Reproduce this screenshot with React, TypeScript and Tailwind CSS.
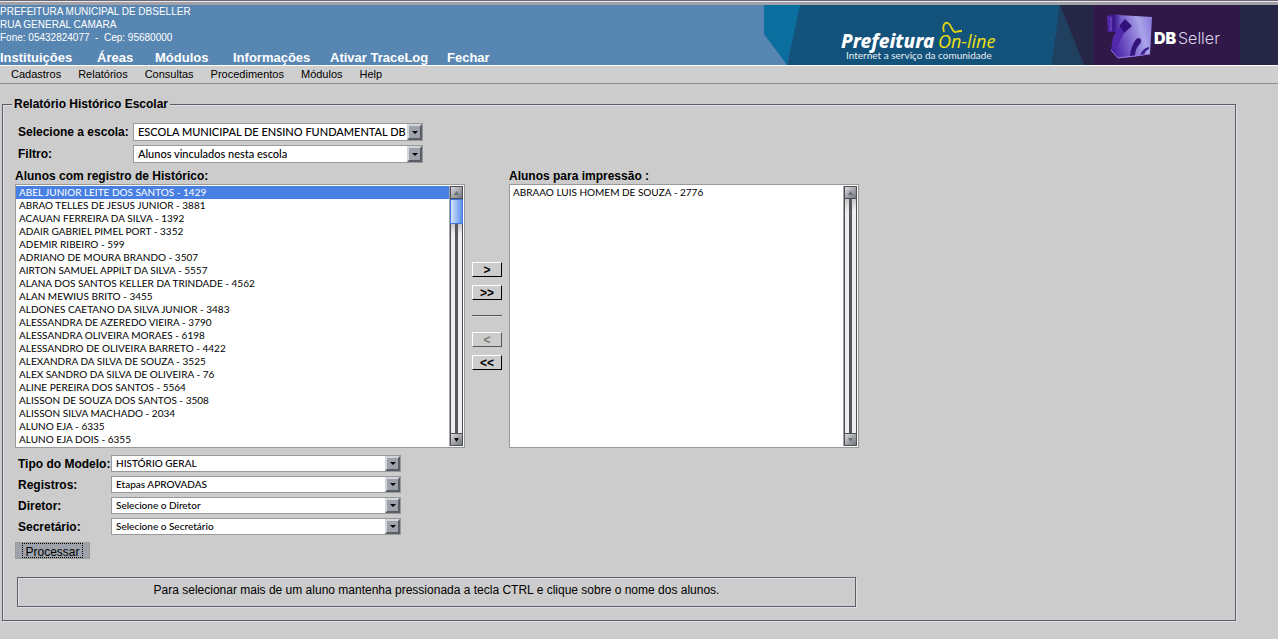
import { useId, useState } from "react";

const mainMenu = [
  { label: "Instituições", width: "w-[97px]" },
  { label: "Áreas", width: "w-[58px]" },
  { label: "Módulos", width: "w-[78px]" },
  { label: "Informações", width: "w-[97px]" },
  { label: "Ativar TraceLog", width: "w-[117px]" },
  { label: "Fechar", width: "w-[60px]" },
];

const subMenu = ["Cadastros", "Relatórios", "Consultas", "Procedimentos", "Módulos", "Help"];

const alunos = [
  "ABEL JUNIOR LEITE DOS SANTOS - 1429",
  "ABRAO TELLES DE JESUS JUNIOR - 3881",
  "ACAUAN FERREIRA DA SILVA - 1392",
  "ADAIR GABRIEL PIMEL PORT - 3352",
  "ADEMIR RIBEIRO - 599",
  "ADRIANO DE MOURA BRANDO - 3507",
  "AIRTON SAMUEL APPILT DA SILVA - 5557",
  "ALANA DOS SANTOS KELLER DA TRINDADE - 4562",
  "ALAN MEWIUS BRITO - 3455",
  "ALDONES CAETANO DA SILVA JUNIOR - 3483",
  "ALESSANDRA DE AZEREDO VIEIRA - 3790",
  "ALESSANDRA OLIVEIRA MORAES - 6198",
  "ALESSANDRO DE OLIVEIRA BARRETO - 4422",
  "ALEXANDRA DA SILVA DE SOUZA - 3525",
  "ALEX SANDRO DA SILVA DE OLIVEIRA - 76",
  "ALINE PEREIRA DOS SANTOS - 5564",
  "ALISSON DE SOUZA DOS SANTOS - 3508",
  "ALISSON SILVA MACHADO - 2034",
  "ALUNO EJA - 6335",
  "ALUNO EJA DOIS - 6355",
];

function Banner() {
  return (
    <svg width="514" height="60" viewBox="0 0 514 60" className="shrink-0" role="img" aria-label="Prefeitura On-line, DBSeller">
      <defs>
        <linearGradient id="cube" x1="0" y1="0.6" x2="1" y2="0.3">
          <stop offset="0" stopColor="#4a20a6" />
          <stop offset="0.4" stopColor="#7a62cc" />
          <stop offset="0.75" stopColor="#aaa4e8" />
          <stop offset="1" stopColor="#8c7ede" />
        </linearGradient>
        <linearGradient id="shade" x1="0" y1="0" x2="1" y2="0">
          <stop offset="0" stopColor="#5a2cb0" />
          <stop offset="0.5" stopColor="#3a168c" />
          <stop offset="1" stopColor="#6e55c4" />
        </linearGradient>
      </defs>
      <path d="M0 0H37L23 60L0 29Z" fill="#0a6f9f" />
      <path d="M36 0H300V60H23Z" fill="#13527b" />
      <path d="M296 0H514V60H288Z" fill="#262746" />
      <path d="M296 0L320 60H288Z" fill="#20405f" />
      <rect x="330" width="146" height="60" fill="#301849" />
      <path d="M354 10L388 12L386 49L368 52L354 53L347 45L349 32L353 27Z" fill="url(#cube)" />
      <path d="M343 11L354 9L357 14L353 27L344 27Z" fill="url(#shade)" />
      <path d="M347 12V26" stroke="#7c58d0" strokeWidth="1" />
      <path d="M361 14L368 21L360 28L355 21Z" fill="#32107c" />
      <path d="M355 22L360 28L352 44L348 43L349 32Z" fill="#5228ac" />
      <path d="M366 51C367 43 370 35 374 33C378 33 378 37 375 40C372 43 371 47 371 51Z" fill="#33127a" />
      <path d="M376 50C378 46 380 43 385 42L385 44C382 45 381 47 380 50Z" fill="#3f2090" />
      <path d="M347 45L354 53L386 49" stroke="#9a78e4" strokeWidth="1" fill="none" />
      <text x="77" y="43" fill="#fff" fontFamily="Noto Sans, sans-serif" fontSize="19" fontWeight="800" fontStyle="italic">
        Prefeitura
      </text>
      <text x="174" y="43" fill="#f0e010" fontFamily="Open Sans, sans-serif" fontSize="18" fontWeight="400" fontStyle="italic">
        On-line
      </text>
      <path d="M180 27C178 20 181 17 184 18C188 20 188 28 192 27C194 26 196 26 198 26" stroke="#e2d414" strokeWidth="1.8" fill="none" />
      <text x="82" y="54" fill="#e8f0f6" fontFamily="Lato, sans-serif" fontSize="10">
        Internet a serviço da comunidade
      </text>
      <text x="390" y="39" fill="#fff" fontFamily="Inter, sans-serif" fontSize="16" fontWeight="900">
        DB
      </text>
      <text x="414" y="39" fill="#ddd6e6" fontFamily="Inter, sans-serif" fontSize="16" fontWeight="300">
        Seller
      </text>
    </svg>
  );
}

function Header() {
  return (
    <header>
      <div className="h-[5px] border-t border-[#6c6872] bg-[#a0a0a6]">
        <div className="h-px bg-[#e8e8ee]" />
      </div>
      <div className="flex h-[60px] justify-between bg-[#5886b2] text-white">
        <div className="flex flex-col justify-between whitespace-nowrap">
          <address className="text-[10px] leading-[13px] not-italic">
            PREFEITURA MUNICIPAL DE DBSELLER
            <br />
            RUA GENERAL CAMARA
            <br />
            Fone: 05432824077 &nbsp;-&nbsp; Cep: 95680000
          </address>
          <nav className="flex text-[13px] leading-[14px] font-bold" aria-label="Principal">
            {mainMenu.map((item) => (
              <a key={item.label} href="#" className={item.width}>
                {item.label}
              </a>
            ))}
          </nav>
        </div>
        <Banner />
      </div>
      <nav
        className="flex h-[19px] gap-[17px] border-t border-b border-t-white border-b-[#8e8e8e] bg-[#cfcfcf] pl-[11px] text-[11px] leading-4"
        aria-label="Módulo"
      >
        {subMenu.map((label) => (
          <a key={label} href="#">
            {label}
          </a>
        ))}
      </nav>
    </header>
  );
}

type SelectRowProps = { label: string; value: string; size: "wide" | "narrow" };

function SelectRow({ label, value, size }: SelectRowProps) {
  const id = useId();
  const wide = size === "wide";
  return (
    <div className="flex items-center">
      <label
        htmlFor={id}
        className={
          wide
            ? "w-[115px] text-[12px] leading-4 font-bold whitespace-nowrap"
            : "w-[93px] text-[12px] leading-4 font-bold whitespace-nowrap"
        }
      >
        {label}
      </label>
      <div className={wide ? "relative h-[18px] w-[290px]" : "relative h-[17px] w-[290px]"}>
        <select
          id={id}
          className={
            wide
              ? "block h-full w-full appearance-none border border-[#999] bg-white pr-4 pl-1 font-['Comic_Sans_MS',Lato,sans-serif] text-[11px] leading-4 font-medium text-black"
              : "block h-full w-full appearance-none border border-[#999] bg-white pr-4 pl-1 font-['Comic_Sans_MS',Lato,sans-serif] text-[10px] leading-[15px] font-medium text-black"
          }
        >
          <option>{value}</option>
        </select>
        <span className="pointer-events-none absolute inset-y-px right-px flex w-[15px] items-center justify-center border-2 border-t-[#d2d5da] border-r-[#5a5d66] border-b-[#5a5d66] border-l-[#d2d5da] bg-[#9da2ab]">
          <svg width="6" height="3" viewBox="0 0 6 3" className="shrink-0" aria-hidden="true">
            <path d="M0 0H6L3 3Z" fill="#000" />
          </svg>
        </span>
      </div>
    </div>
  );
}

function ScrollArrow({ down, enabled }: { down?: boolean; enabled?: boolean }) {
  return (
    <span className="flex h-[13px] w-[13px] shrink-0 items-center justify-center border border-[#4c4e54] bg-linear-to-br from-[#d8dade] to-[#74767e]">
      <svg width="5" height="4" viewBox="0 0 5 4" aria-hidden="true">
        <path d={down ? "M0 0H5L2.5 4Z" : "M0 4H5L2.5 0Z"} fill={enabled ? "#000" : "#6c6e74"} />
      </svg>
    </span>
  );
}

function ScrollBar({ thumb }: { thumb?: boolean }) {
  return (
    <div className="my-px mr-px flex w-[14px] flex-col border-l border-[#a0a3aa]" aria-hidden="true">
      <ScrollArrow />
      {thumb && (
        <span className="h-[25px] w-[13px] shrink-0 border border-[#3f78dc] bg-linear-to-r from-[#d5e3fb] to-[#5e90e8]" />
      )}
      <span className="flex w-[13px] grow justify-center border-x border-[#4c4e54] bg-linear-to-b from-[#c8c8c8] via-[#eeeef0] via-5% to-[#eeeef0]">
        <span className="w-[3px] bg-[#54585c]" />
      </span>
      <ScrollArrow down enabled={thumb} />
    </div>
  );
}

type ListProps = { label: string; items: string[]; selected?: string[]; width: string; thumb?: boolean };

function StudentList({ label, items, selected = [], width, thumb }: ListProps) {
  const id = useId();
  const [value, setValue] = useState(selected);
  return (
    <div className={width}>
      <label htmlFor={id} className="block text-[12px] leading-[15px] font-bold">
        {label}
      </label>
      <div className="flex h-[264px] border border-[#999] bg-white">
        <select
          id={id}
          multiple
          size={20}
          value={value}
          onChange={(e) => setValue(Array.from(e.target.selectedOptions, (o) => o.value))}
          className="h-full min-w-0 grow overflow-y-auto border-0 bg-white p-0 pt-px font-['Comic_Sans_MS',Lato,sans-serif] text-[10px] font-medium text-black outline-none [scrollbar-width:none]"
        >
          {items.map((item) => (
            <option
              key={item}
              value={item}
              className="h-[13px] min-h-0 rounded-none p-0 pl-[3px] leading-[13px] checked:bg-[linear-gradient(#4780e2,#4780e2)] checked:[-webkit-text-fill-color:white]"
            >
              {item}
            </option>
          ))}
        </select>
        <ScrollBar thumb={thumb} />
      </div>
    </div>
  );
}

function MoveButton({ children, label, disabled }: { children: string; label: string; disabled?: boolean }) {
  return (
    <button
      type="button"
      aria-label={label}
      disabled={disabled}
      className="h-[15px] w-full border border-t-white border-r-black border-b-black border-l-white bg-[#ccc] text-[12px] leading-[15px] font-bold text-black disabled:border-r-[#55555c] disabled:border-b-[#55555c] disabled:text-[#777]"
    >
      {children}
    </button>
  );
}

export default function App() {
  return (
    <div className="min-h-screen bg-[#ccc] pb-4 font-['Liberation_Sans',Arial,sans-serif] text-black">
      <Header />
      <main className="pt-[13px] pr-[42px] pl-[2px]">
        <fieldset className="border border-[#5e5e68] px-3 pb-[13px] shadow-[1px_1px_0_#dedee4,inset_1px_1px_0_#dedee4]">
          <legend className="-ml-[3px] bg-[#ccc] px-[2px] text-[12px] leading-[15px] font-bold">Relatório Histórico Escolar</legend>
          <form onSubmit={(e) => e.preventDefault()}>
            <div className="flex flex-col gap-1 pt-[11px] pl-[3px]">
              <SelectRow size="wide" label="Selecione a escola:" value="ESCOLA MUNICIPAL DE ENSINO FUNDAMENTAL DBSELLER" />
              <SelectRow size="wide" label="Filtro:" value="Alunos vinculados nesta escola" />
            </div>
            <div className="flex pt-[6px]">
              <StudentList label="Alunos com registro de Histórico:" items={alunos} selected={[alunos[0]]} width="w-[450px]" thumb />
              <div className="mx-[7px] flex w-[30px] flex-col gap-2 pt-[93px]">
                <MoveButton label="Adicionar selecionados">&gt;</MoveButton>
                <MoveButton label="Adicionar todos">&gt;&gt;</MoveButton>
                <hr className="my-[7px] h-[2px] border-0 border-t border-[#55555c] bg-[#ddd]" />
                <MoveButton label="Remover selecionados" disabled>
                  &lt;
                </MoveButton>
                <MoveButton label="Remover todos">&lt;&lt;</MoveButton>
              </div>
              <StudentList label="Alunos para impressão :" items={["ABRAAO LUIS HOMEM DE SOUZA - 2776"]} width="w-[350px]" />
            </div>
            <div className="flex flex-col gap-1 pt-[7px] pl-[3px]">
              <SelectRow size="narrow" label="Tipo do Modelo:" value="HISTÓRIO GERAL" />
              <SelectRow size="narrow" label="Registros:" value="Etapas APROVADAS" />
              <SelectRow size="narrow" label="Diretor:" value="Selecione o Diretor" />
              <SelectRow size="narrow" label="Secretário:" value="Selecione o Secretário" />
            </div>
            <button type="submit" className="mt-[7px] flex h-[17px] w-[75px] justify-center border border-[#999] bg-[#9da2ab] text-[12px]">
              <span className="h-[15px] border border-dotted border-black px-[2px] leading-[17px]">Processar</span>
            </button>
          </form>
          <p className="mt-[18px] ml-[2px] h-[30px] w-[839px] border border-[#5e5e68] text-center text-[12px] leading-[25px] shadow-[1px_1px_0_#dedee4,inset_1px_1px_0_#dedee4]">
            Para selecionar mais de um aluno mantenha pressionada a tecla CTRL e clique sobre o nome dos alunos.
          </p>
        </fieldset>
      </main>
    </div>
  );
}
